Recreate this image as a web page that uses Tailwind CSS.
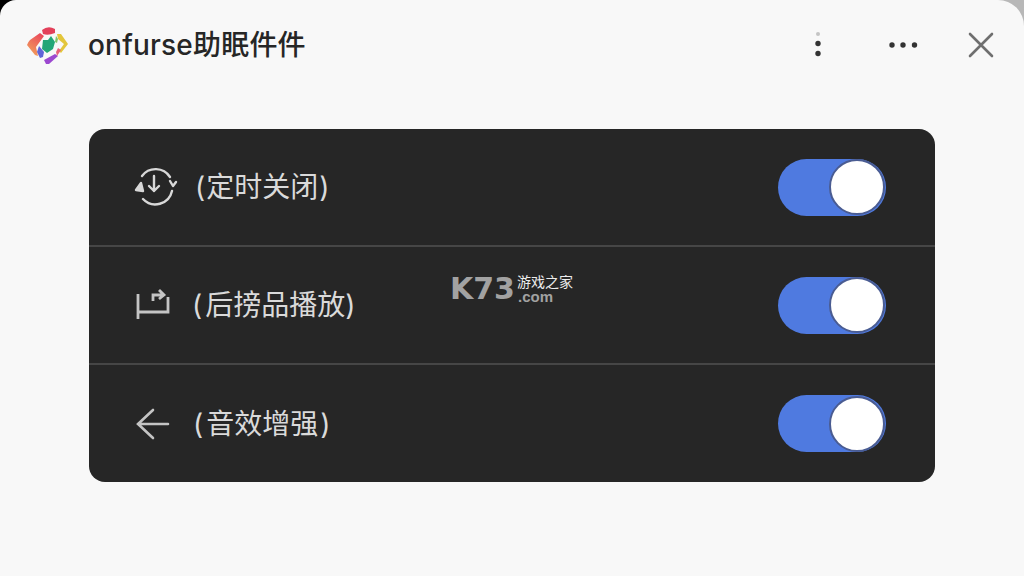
<!DOCTYPE html>
<html><head><meta charset="utf-8"><script src="https://cdn.jsdelivr.net/npm/@tailwindcss/browser@4"></script></head>
<body class="w-[1024px] h-[576px] overflow-hidden bg-linear-to-r from-black from-[2%] to-[#b8b8b8] to-[98%]">
<div class="w-full h-full bg-[#f8f8f8] rounded-tl-[16px] rounded-tr-[26px] flex flex-col font-['Inter','Noto_Sans_CJK_SC',sans-serif]">
  <header class="h-[89px] shrink-0 flex items-center pl-[27px] pr-[29px]">
    <svg class="w-[42px] h-[40px] shrink-0" viewBox="0 0 42 40">
      <defs><linearGradient id="coral" x1="0.700" y1="0" x2="0.200" y2="1"><stop offset="0" stop-color="#ea4a5c"/><stop offset="1" stop-color="#f2a45c"/></linearGradient></defs>
      <path d="M15 5 Q21 0 28 4 L28 8 Q21 11 16 9Z" fill="#e3405a"/>
      <path d="M13 8 L17 11 L9 22 L11 31 L8 30 L0 20 Q1 17 3 15Z" fill="url(#coral)"/>
      <path d="M16 15 L21 15 L24 11 L28 17 L26 24 L20 28 L15 24Z" fill="#23a677"/>
      <path d="M30 9 L34 9 L41 19 L34 28 L32 26 L37 19 L31 14Z" fill="#e3c63c"/>
      <path d="M29 11 L31 14 L30 18 L28 17Z" fill="#7fc46a"/>
      <path d="M12 21 L17 27 L16 32 L13 33 L10 27Z" fill="#5f63d8"/>
      <path d="M17 35 L28 29 L31 31 L22 39 L19 39Z" fill="#9c48d0"/>
      <path d="M31 23 L34 25 L30 31 L29 27Z" fill="#e8607a"/>
    </svg>
    <h1 class="ml-[19px] text-[#262626] text-[28px] leading-none font-medium tracking-[0.2px]">onfurse助眠件件</h1>
    <div class="ml-auto flex items-center">
      <svg class="w-[8px] h-[30px]" viewBox="0 0 8 30"><circle cx="4" cy="4" r="2" fill="#c4c4c4"/><circle cx="4" cy="13.500" r="2.700" fill="#333"/><circle cx="4" cy="23.500" r="2.700" fill="#333"/></svg>
      <svg class="ml-[66px] w-[30px] h-[8px]" viewBox="0 0 30 8"><circle cx="4" cy="4" r="2.700" fill="#333"/><circle cx="15" cy="4" r="2.700" fill="#333"/><circle cx="26.500" cy="4" r="2.700" fill="#333"/></svg>
      <svg class="ml-[49px] w-[28px] h-[28px]" viewBox="0 0 28 28"><path d="M3 3 L25 25 M25 3 L3 25" stroke="#6f6f6f" stroke-width="2.600" stroke-linecap="round"/></svg>
    </div>
  </header>
  <main class="px-[89px] pt-[40px]">
    <section class="relative w-[846px] h-[353px] bg-[#262626] rounded-[16px] flex flex-col text-[#dadada]">
      <div class="h-[118px] flex items-center pl-[44px] pr-[49px] border-b-2 border-[#464646]">
        <svg class="w-[46px] h-[40px] shrink-0" viewBox="0 0 46 40" fill="none" stroke="#d8d8d8" stroke-width="2.400" stroke-linecap="round" stroke-linejoin="round"><path d="M9 9 A17 17 0 0 1 37 10"/><path d="M39 24 A17 17 0 0 1 10 32"/><path d="M3 23 L8 16 L10 24Z" fill="#d8d8d8"/><path d="M37 14 L40 19 L43 15"/><path d="M21 9 V24 M16 19 L21 24 L26 19"/></svg>
        <span class="ml-[16px] text-[28px] leading-none flex"><span class="mr-[1px]">(</span>定时关闭<span class="ml-[1px]">)</span></span>
        <div class="ml-auto w-[108px] h-[57px] rounded-full bg-[#4f7ae0] flex items-center justify-end pr-[1px]"><div class="w-[56px] h-[56px] rounded-full bg-white border-2 border-[#4a5c92]"></div></div>
      </div>
      <div class="h-[118px] flex items-center pl-[44px] pr-[49px] border-b-2 border-[#464646]">
        <svg class="w-[42px] h-[40px] shrink-0" viewBox="0 0 42 40" fill="none" stroke="#c4c4c4" stroke-width="2.800"><path d="M5 9 V34 M5 27 H35 V12"/><path d="M20 16 V10 H31 M26 5 L31 10 L26 14"/></svg>
        <span class="ml-[17px] text-[28px] leading-none flex"><span class="mr-[3px]">(</span>后搒品播放<span>)</span></span>
        <div class="ml-auto w-[108px] h-[57px] rounded-full bg-[#4f7ae0] flex items-center justify-end pr-[1px]"><div class="w-[56px] h-[56px] rounded-full bg-white border-2 border-[#4a5c92]"></div></div>
      </div>
      <div class="h-[117px] flex items-center pl-[44px] pr-[49px]">
        <svg class="w-[42px] h-[40px] shrink-0" viewBox="0 0 42 40" fill="none" stroke="#c4c4c4" stroke-width="2.600" stroke-linecap="round"><path d="M6 20 H35 M20 6 L5 20 L20 34"/></svg>
        <span class="ml-[18px] text-[28px] leading-none flex"><span class="mr-[3px]">(</span>音效增强<span class="ml-[2px]">)</span></span>
        <div class="ml-auto w-[108px] h-[57px] rounded-full bg-[#4f7ae0] flex items-center justify-end pr-[1px]"><div class="w-[56px] h-[56px] rounded-full bg-white border-2 border-[#4a5c92]"></div></div>
      </div>
      <div class="absolute left-[361px] top-[145px] flex items-center">
        <span class="font-['DejaVu_Sans'] font-bold text-[30px] leading-none text-[#a2a2a2]">K73</span>
        <div class="ml-[2px] flex flex-col leading-none">
          <span class="text-[14px] text-[#ececec]">游戏之家</span>
          <span class="font-['Liberation_Sans'] font-bold text-[15px] text-[#a2a2a2] ml-[1px]">.com</span>
        </div>
      </div>
    </section>
  </main>
</div>
</body></html>
